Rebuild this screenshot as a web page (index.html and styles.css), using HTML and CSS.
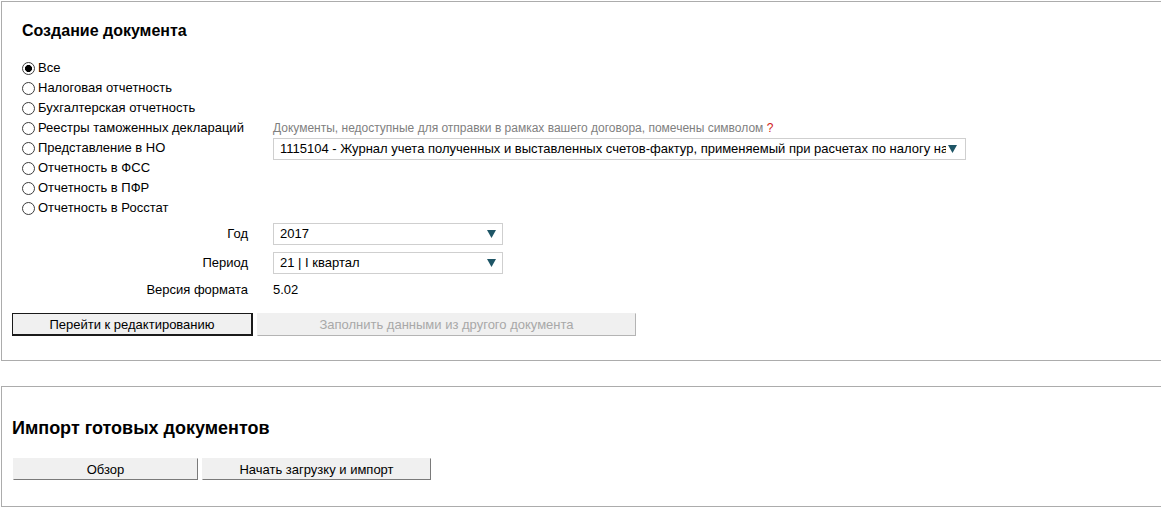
FILE: index.html
```html
<!DOCTYPE html>
<html lang="ru">
<head>
<meta charset="utf-8">
<title>Создание документа</title>
<link rel="stylesheet" href="styles.css">
</head>
<body>
<section class="panel panel-create">
  <h3 class="title">Создание документа</h3>
  <div class="choice">
    <div class="radios">
      <label class="radio"><input type="radio" name="kind" checked><span>Все</span></label>
      <label class="radio"><input type="radio" name="kind"><span>Налоговая отчетность</span></label>
      <label class="radio"><input type="radio" name="kind"><span>Бухгалтерская отчетность</span></label>
      <label class="radio"><input type="radio" name="kind"><span>Реестры таможенных деклараций</span></label>
      <label class="radio"><input type="radio" name="kind"><span>Представление в НО</span></label>
      <label class="radio"><input type="radio" name="kind"><span>Отчетность в ФСС</span></label>
      <label class="radio"><input type="radio" name="kind"><span>Отчетность в ПФР</span></label>
      <label class="radio"><input type="radio" name="kind"><span>Отчетность в Росстат</span></label>
    </div>
    <div class="doc-col">
      <div class="hint">Документы, недоступные для отправки в рамках вашего договора, помечены символом <span class="q">?</span></div>
      <div class="select select-wide">
        <span class="select-text">1115104 - Журнал учета полученных и выставленных счетов-фактур, применяемый при расчетах по налогу на добавленную стоимость</span>
        <svg class="arrow" width="9" height="8" viewBox="0 0 9 8"><path d="M0 0H9L4.5 8Z" fill="#1e5566"/></svg>
      </div>
    </div>
  </div>
  <div class="params">
    <div class="plabel">Год</div>
    <div class="select select-small">
      <span class="select-text">2017</span>
      <svg class="arrow" width="9" height="8" viewBox="0 0 9 8"><path d="M0 0H9L4.5 8Z" fill="#1e5566"/></svg>
    </div>
    <div class="plabel">Период</div>
    <div class="select select-small">
      <span class="select-text">21 | I квартал</span>
      <svg class="arrow" width="9" height="8" viewBox="0 0 9 8"><path d="M0 0H9L4.5 8Z" fill="#1e5566"/></svg>
    </div>
    <div class="plabel plabel-ver">Версия формата</div>
    <div class="pvalue">5.02</div>
  </div>
  <div class="actions">
    <button class="btn btn-primary btn-edit">Перейти к редактированию</button>
    <button class="btn btn-disabled btn-fill" disabled>Заполнить данными из другого документа</button>
  </div>
</section>

<section class="panel panel-import">
  <h2 class="title2">Импорт готовых документов</h2>
  <div class="actions2">
    <button class="btn btn-browse">Обзор</button>
    <button class="btn btn-start">Начать загрузку и импорт</button>
  </div>
</section>
</body>
</html>
```
FILE: styles.css
```css
* { box-sizing: border-box; }
html, body { margin: 0; padding: 0; background: #fff; }
body {
  font-family: "Liberation Sans", Arial, sans-serif;
  font-size: 13px;
  color: #000;
}

.panel {
  border: 1px solid #acacac;
  border-right: none;
  margin-left: 1px;
}
.panel-create {
  margin-top: 1px;
  padding: 0 0 24px 10px;
}
.title {
  margin: 19px 0 17px 10px;
  font-size: 16px;
  font-weight: bold;
  line-height: 20px;
}

.choice {
  display: flex;
  padding-left: 10px;
}
.radios {
  width: 251px;
  display: flex;
  flex-direction: column;
}
.radio {
  display: flex;
  align-items: center;
  height: 20px;
  line-height: 20px;
  white-space: nowrap;
}
.radio input {
  appearance: none;
  -webkit-appearance: none;
  width: 13px;
  height: 13px;
  margin: 0 3px 0 0;
  border: 1px solid #3c3c3c;
  border-radius: 50%;
  background: #fff;
  flex: none;
}
.radio input:checked {
  background: radial-gradient(circle, #000 0, #000 3.2px, #fff 3.8px);
}

.doc-col {
  padding-top: 60px;
}
.hint {
  font-size: 12px;
  line-height: 20px;
  color: #7f7f7f;
}
.hint .q {
  color: #d02020;
}

.select {
  display: flex;
  align-items: center;
  height: 22px;
  border: 1px solid #cfcfcf;
  background: #fff;
  padding: 0 6px 0 6px;
}
.select-text {
  flex: 1;
  overflow: hidden;
  white-space: nowrap;
  line-height: 20px;
}
.select .arrow {
  flex: none;
  margin-left: 2px;
}
.select-wide {
  width: 693px;
  padding-right: 8px;
}
.select-small {
  width: 230px;
}

.params {
  display: grid;
  grid-template-columns: 261px 230px;
  row-gap: 7px;
  margin-top: 5px;
}
.plabel {
  text-align: right;
  padding-right: 25px;
  line-height: 22px;
}
.plabel-ver, .pvalue {
  line-height: 19px;
  margin-top: -1px;
}

.actions {
  display: flex;
  gap: 4px;
  margin-top: 14px;
}
.btn {
  font-family: "Liberation Sans", Arial, sans-serif;
  font-size: 13px;
  height: 23px;
  padding: 0;
  background: #f0f0f0;
  color: #000;
  border-style: solid;
  border-width: 1px;
  border-color: #f0f0f0 #7a7a7a #7a7a7a #f0f0f0;
  border-radius: 0;
}
.btn-primary {
  border-color: #1a1a1a;
  border-width: 1px 2px 2px 1px;
}
.btn-disabled {
  color: #a8a8a8;
  border-color: #f0f0f0 #b4b4b4 #b4b4b4 #f0f0f0;
}
.btn-edit { width: 241px; }
.btn-fill { width: 379px; }

.panel-import {
  margin-top: 25px;
  padding: 0 0 26px 10px;
}
.title2 {
  margin: 30px 0 19px 0;
  font-size: 18px;
  font-weight: bold;
  line-height: 22px;
}
.actions2 {
  display: flex;
  gap: 4px;
  margin-left: 1px;
}
.btn-browse { width: 185px; height: 22px; }
.btn-start { width: 229px; height: 22px; }
```
